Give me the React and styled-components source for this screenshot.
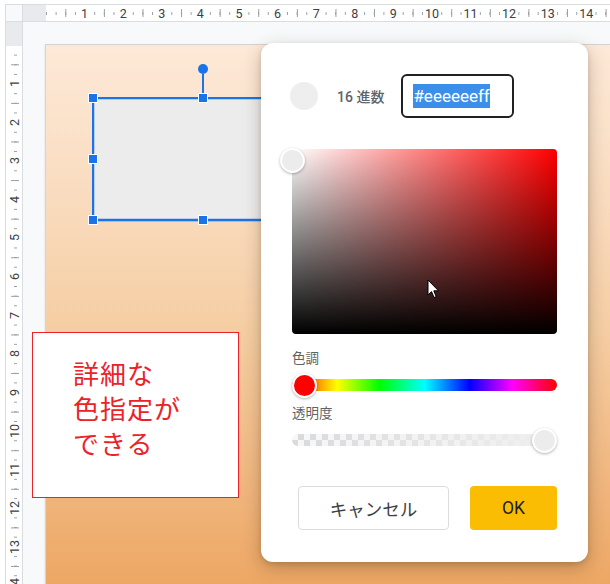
import React from "react";
import styled, { createGlobalStyle } from "styled-components";

const GlobalStyle = createGlobalStyle`
  html, body {
    margin: 0;
    padding: 0;
    width: 610px;
    height: 584px;
    overflow: hidden;
    background: #fff;
  }
  * { box-sizing: border-box; }
  #root { width: 610px; height: 584px; }
`;

const FONT = `"Roboto", "Noto Sans CJK JP", sans-serif`;
const UNIT = 38.6;
const TICK = "#9aa0a6";

const Screen = styled.div`
  width: 610px;
  height: 584px;
  padding: 4px 0 0 5px;
  background: #fff;
  font-family: ${FONT};
`;

const Frame = styled.div`
  height: 100%;
  display: grid;
  grid-template-columns: 17px 1fr;
  grid-template-rows: 17px 1fr;
  border-top: 1px solid #dadce0;
  border-left: 1px solid #dadce0;
  overflow: hidden;
`;

const Corner = styled.div`
  background: #f8f9fa;
  border-right: 1px solid #dadce0;
  border-bottom: 1px solid #dadce0;
`;

const HRuler = styled.div`
  display: flex;
  border-bottom: 1px solid #dadce0;
  overflow: hidden;
`;

const VRuler = styled.div`
  display: flex;
  flex-direction: column;
  border-right: 1px solid #dadce0;
  overflow: hidden;
`;

const RulerGap = styled.div`
  flex: none;
  width: ${(p) => (p.$vertical ? "100%" : "23px")};
  height: ${(p) => (p.$vertical ? "24px" : "100%")};
  background: #e8eaed;
`;

const HScale = styled.div`
  flex: 1;
  display: flex;
  align-items: center;
  padding-left: ${UNIT / 2}px;
  background:
    linear-gradient(to right, ${TICK} 0 1px, transparent 1px) ${UNIT / 2}px 50% / ${UNIT}px 8px repeat-x,
    linear-gradient(to right, ${TICK} 0 1px, transparent 1px) 0 50% / ${UNIT / 4}px 3px repeat-x,
    #fff;
`;

const VScale = styled.div`
  flex: 1;
  display: flex;
  flex-direction: column;
  align-items: center;
  padding-top: ${UNIT / 2 - 1}px;
  background:
    linear-gradient(to bottom, ${TICK} 0 1px, transparent 1px) 60% ${UNIT / 2 - 1}px / 8px ${UNIT}px repeat-y,
    linear-gradient(to bottom, ${TICK} 0 1px, transparent 1px) 60% -1px / 3px ${UNIT / 4}px repeat-y,
    #fff;
`;

const HCell = styled.div`
  flex: none;
  width: ${UNIT}px;
  display: flex;
  justify-content: center;
`;

const VCell = styled.div`
  flex: none;
  height: ${UNIT}px;
  display: flex;
  align-items: center;
  justify-content: center;
`;

const RulerNum = styled.span`
  background: #fff;
  color: #3c4043;
  font-size: 12.5px;
  line-height: 13px;
  padding: ${(p) => (p.$vertical ? "1px 0" : "0 1px")};
  ${(p) =>
    p.$vertical &&
    `
    writing-mode: vertical-rl;
    transform: rotate(180deg);
  `}
`;

const Canvas = styled.div`
  position: relative;
  background: #f8f9fa;
  overflow: hidden;
`;

const Page = styled.div`
  width: 700px;
  height: 620px;
  margin: 22px 0 0 22px;
  border: 1px solid #d4d4d4;
  box-shadow: 0 1px 2px rgba(60, 64, 67, 0.15);
  background: linear-gradient(
    180deg,
    #fde9d8 0px,
    #f9dcbf 150px,
    #f5cda2 290px,
    #f1b983 420px,
    #eda764 540px,
    #eb9f58 620px
  );
`;

const Shape = styled.div`
  position: absolute;
  left: 69px;
  top: 75px;
  width: 222px;
  height: 124px;
  background: #ececec;
  border: 2px solid #1a73e8;
  box-shadow: inset 0 0 0 1px rgba(26, 115, 232, 0.25), 0 1px 0 rgba(26, 115, 232, 0.3);
`;

const Handle = styled.div`
  position: absolute;
  width: 10px;
  height: 10px;
  background: #1a73e8;
  border: 1px solid #fff;
  left: ${(p) => p.$x};
  top: ${(p) => p.$y};
`;

const RotateHandle = styled.div`
  position: absolute;
  top: -35px;
  left: calc(50% - 5px);
  width: 10px;
  display: flex;
  flex-direction: column;
  align-items: center;
`;

const RotateDot = styled.div`
  width: 10px;
  height: 10px;
  border-radius: 50%;
  background: #1a73e8;
`;

const RotateStem = styled.div`
  width: 2px;
  height: 25px;
  background: #1a73e8;
`;

const TextBox = styled.div`
  position: absolute;
  left: 9px;
  top: 310px;
  width: 207px;
  height: 166px;
  background: #fff;
  border: 1px solid #ec2229;
  padding: 22px 0 0 40px;
  color: #ec2229;
  font-family: "Noto Sans CJK JP", sans-serif;
  font-size: 26px;
  line-height: 35px;
  letter-spacing: 1px;
`;

const Dialog = styled.div`
  position: absolute;
  left: 238px;
  top: 21px;
  width: 327px;
  height: 519px;
  background: #fff;
  border-radius: 12px;
  box-shadow: 0 6px 18px rgba(60, 40, 20, 0.28), 0 2px 5px rgba(0, 0, 0, 0.12);
  padding: 31px 31px 32px;
  display: flex;
  flex-direction: column;
  font-family: ${FONT};
`;

const HeaderRow = styled.div`
  display: flex;
  align-items: center;
  height: 44px;
`;

const Swatch = styled.div`
  width: 28px;
  height: 28px;
  border-radius: 50%;
  background: ${(p) => p.$color};
  margin-left: -2px;
`;

const HexLabel = styled.span`
  margin-left: 19px;
  font-size: 14px;
  font-weight: 500;
  color: #5f6368;
`;

const HexInput = styled.div`
  margin-left: 17px;
  width: 113px;
  height: 44px;
  border: 2px solid #202124;
  border-radius: 6px;
  padding-left: 10px;
  display: flex;
  align-items: center;
`;

const Selected = styled.span`
  background: #3b8fea;
  color: #fff;
  font-size: 17px;
  line-height: 24px;
`;

const SatPanel = styled.div`
  position: relative;
  margin-top: 31px;
  height: 185px;
  border-radius: 4px;
  background: linear-gradient(to top, #000, rgba(0, 0, 0, 0)),
    linear-gradient(to right, #fff, #f00);
`;

const Thumb = styled.div`
  position: absolute;
  width: 25px;
  height: 25px;
  border-radius: 50%;
  background: ${(p) => p.$color};
  border: 2px solid #fff;
  box-shadow: 0 1px 3px rgba(0, 0, 0, 0.3);
  left: ${(p) => p.$left};
  top: ${(p) => p.$top};
`;

const Cursor = styled.svg`
  position: absolute;
  left: 135px;
  top: 130px;
`;

const FieldLabel = styled.div`
  margin-top: ${(p) => p.$mt}px;
  font-size: 13.5px;
  line-height: 16px;
  color: #5f6368;
`;

const SliderWrap = styled.div`
  position: relative;
  margin-top: ${(p) => p.$mt}px;
  height: 24px;
  display: flex;
  align-items: center;
`;

const HueTrack = styled.div`
  width: 100%;
  height: 12px;
  border-radius: 6px;
  background: linear-gradient(
    to right,
    #f00 0%,
    #ff0 17%,
    #0f0 33%,
    #0ff 50%,
    #00f 67%,
    #f0f 83%,
    #f00 100%
  );
`;

const AlphaTrack = styled.div`
  width: 100%;
  height: 12px;
  border-radius: 6px;
  background: linear-gradient(to right, rgba(238, 238, 238, 0), #eeeeee 95%),
    conic-gradient(#d9dadc 25%, #f7f7f7 0 50%, #d9dadc 0 75%, #f7f7f7 0) 0 0 / 12px 12px;
`;

const ButtonRow = styled.div`
  margin-top: 34px;
  display: flex;
  justify-content: flex-end;
  gap: 21px;
`;

const Button = styled.button`
  height: 44px;
  width: ${(p) => p.$w}px;
  border-radius: 4px;
  font-family: ${FONT};
  font-size: 17.5px;
  cursor: pointer;
  border: ${(p) => (p.$primary ? "none" : "1px solid #dadce0")};
  background: ${(p) => (p.$primary ? "#fbbc04" : "#fff")};
  color: ${(p) => (p.$primary ? "#202124" : "#3c4043")};
`;

export default function App() {
  const hNums = Array.from({ length: 14 }, (_, i) => i + 1);
  const vNums = Array.from({ length: 14 }, (_, i) => i + 1);
  return (
    <>
      <GlobalStyle />
      <Screen>
        <Frame>
          <Corner />
          <HRuler>
            <RulerGap />
            <HScale>
              {hNums.map((n) => (
                <HCell key={n}>
                  <RulerNum>{n}</RulerNum>
                </HCell>
              ))}
            </HScale>
          </HRuler>
          <VRuler>
            <RulerGap $vertical />
            <VScale>
              {vNums.map((n) => (
                <VCell key={n}>
                  <RulerNum $vertical>{n}</RulerNum>
                </VCell>
              ))}
            </VScale>
          </VRuler>
          <Canvas>
            <Page />
            <Shape>
              <RotateHandle>
                <RotateDot />
                <RotateStem />
              </RotateHandle>
              <Handle $x="-6px" $y="-6px" />
              <Handle $x="calc(50% - 5px)" $y="-6px" />
              <Handle $x="calc(100% - 4px)" $y="-6px" />
              <Handle $x="-6px" $y="calc(50% - 5px)" />
              <Handle $x="calc(100% - 4px)" $y="calc(50% - 5px)" />
              <Handle $x="-6px" $y="calc(100% - 4px)" />
              <Handle $x="calc(50% - 5px)" $y="calc(100% - 4px)" />
              <Handle $x="calc(100% - 4px)" $y="calc(100% - 4px)" />
            </Shape>
            <TextBox>
              詳細な
              <br />
              色指定が
              <br />
              できる
            </TextBox>
            <Dialog>
              <HeaderRow>
                <Swatch $color="#eeeeee" />
                <HexLabel>16 進数</HexLabel>
                <HexInput>
                  <Selected>#eeeeeeff</Selected>
                </HexInput>
              </HeaderRow>
              <SatPanel>
                <Thumb $color="#ececec" $left="-12px" $top="-1px" />
                <Cursor width="13" height="20" viewBox="0 0 13 20">
                  <path
                    d="M1 1 L1 16 L4.5 12.6 L7 18.5 L9.2 17.6 L6.8 11.8 L11.5 11.8 Z"
                    fill="#fff"
                    stroke="#000"
                    strokeWidth="1"
                    strokeLinejoin="miter"
                  />
                </Cursor>
              </SatPanel>
              <FieldLabel $mt={16}>色調</FieldLabel>
              <SliderWrap $mt={7}>
                <HueTrack />
                <Thumb $color="#ff0000" $left="0px" $top="0px" />
              </SliderWrap>
              <FieldLabel $mt={8}>透明度</FieldLabel>
              <SliderWrap $mt={7}>
                <AlphaTrack />
                <Thumb $color="#ececec" $left="calc(100% - 25px)" $top="0px" />
              </SliderWrap>
              <ButtonRow>
                <Button $w={151}>キャンセル</Button>
                <Button $w={87} $primary>
                  OK
                </Button>
              </ButtonRow>
            </Dialog>
          </Canvas>
        </Frame>
      </Screen>
    </>
  );
}
